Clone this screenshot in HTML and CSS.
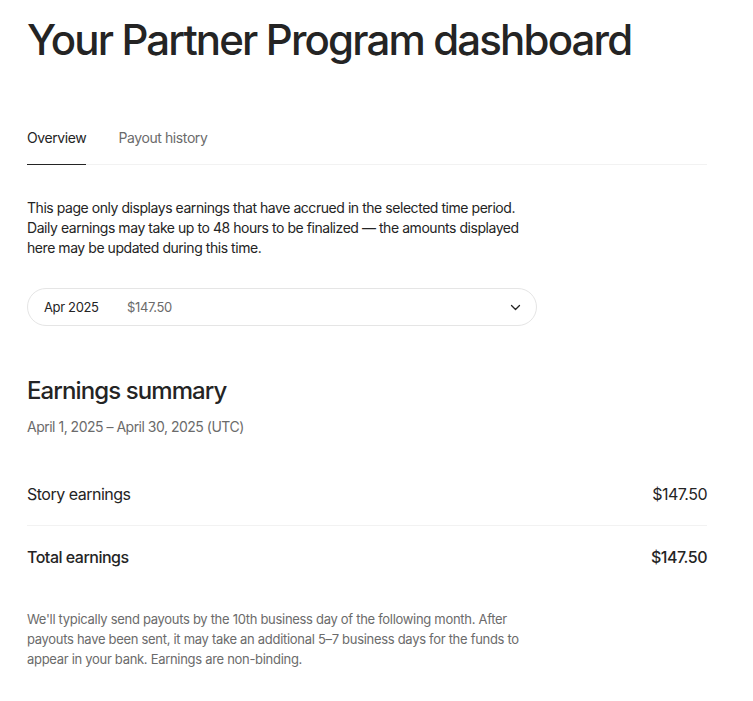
FILE: index.html
```html
<!DOCTYPE html>
<html lang="en">
<head>
<meta charset="utf-8">
<title>Partner Program dashboard</title>
<link rel="stylesheet" href="styles.css">
</head>
<body>
<main class="page">
  <h1 class="title">Your Partner Program dashboard</h1>
  <nav class="tabs">
    <a class="tab active">Overview</a>
    <a class="tab">Payout history</a>
  </nav>
  <p class="intro">This page only displays earnings that have accrued in the selected time period. Daily earnings may take up to 48 hours to be finalized — the amounts displayed here may be updated during this time.</p>
  <div class="select">
    <span class="month">Apr 2025</span>
    <span class="amount">$147.50</span>
    <svg class="chev" width="13" height="13" viewBox="0 0 13 13"><path d="M2.5 4.5 L6.5 8.5 L10.5 4.5" fill="none" stroke="#242424" stroke-width="1.3" stroke-linecap="round" stroke-linejoin="round"/></svg>
  </div>
  <h2 class="summary">Earnings summary</h2>
  <p class="range">April 1, 2025 – April 30, 2025 (UTC)</p>
  <div class="rows">
    <div class="row"><span>Story earnings</span><span>$147.50</span></div>
    <div class="row total"><span>Total earnings</span><span>$147.50</span></div>
  </div>
  <p class="note">We'll typically send payouts by the 10th business day of the following month. After payouts have been sent, it may take an additional 5–7 business days for the funds to appear in your bank. Earnings are non-binding.</p>
</main>
</body>
</html>
```
FILE: styles.css
```css
* { box-sizing: border-box; }
body {
  margin: 0;
  background: #fff;
  color: #242424;
  font-family: Inter, "Liberation Sans", sans-serif;
}
.page {
  width: 680px;
  margin-left: 27px;
  padding-top: 14px;
}
.title {
  margin: 0;
  font-size: 42px;
  line-height: 52px;
  font-weight: 500;
  letter-spacing: -1.85px;
}
.tabs {
  display: flex;
  gap: 32px;
  margin-top: 62px;
  border-bottom: 1px solid #f2f2f2;
}
.tab {
  font-size: 14px;
  line-height: 20px;
  padding-bottom: 16px;
  color: #6b6b6b;
  letter-spacing: -0.4px;
  border-bottom: 1px solid transparent;
  margin-bottom: -1px;
}
.tab.active {
  color: #242424;
  border-bottom-color: #242424;
}
.intro {
  margin: 33px 0 0;
  width: 500px;
  font-size: 14px;
  line-height: 20px;
  letter-spacing: -0.45px;
}
.select {
  margin-top: 30px;
  width: 510px;
  height: 38px;
  border: 1px solid #e5e5e5;
  border-radius: 19px;
  display: flex;
  align-items: center;
  padding: 0 14px 0 16px;
  font-size: 13px;
  letter-spacing: -0.35px;
}
.month { width: 83px; }
.amount { color: #6b6b6b; flex: 1; }
.chev { display: block; }
.summary {
  margin: 50px 0 0;
  font-size: 24px;
  line-height: 30px;
  font-weight: 500;
  letter-spacing: -0.9px;
}
.range {
  margin: 11px 0 0;
  font-size: 14px;
  line-height: 20px;
  color: #6b6b6b;
  letter-spacing: -0.5px;
}
.rows { margin-top: 25px; }
.row {
  display: flex;
  justify-content: space-between;
  align-items: center;
  height: 63px;
  font-size: 16px;
  letter-spacing: -0.5px;
}
.row + .row { border-top: 1px solid #f2f2f2; }
.row.total { font-weight: 500; }
.note {
  margin: 21px 0 0;
  width: 510px;
  font-size: 13px;
  line-height: 20px;
  color: #6b6b6b;
  letter-spacing: -0.3px;
}
```
